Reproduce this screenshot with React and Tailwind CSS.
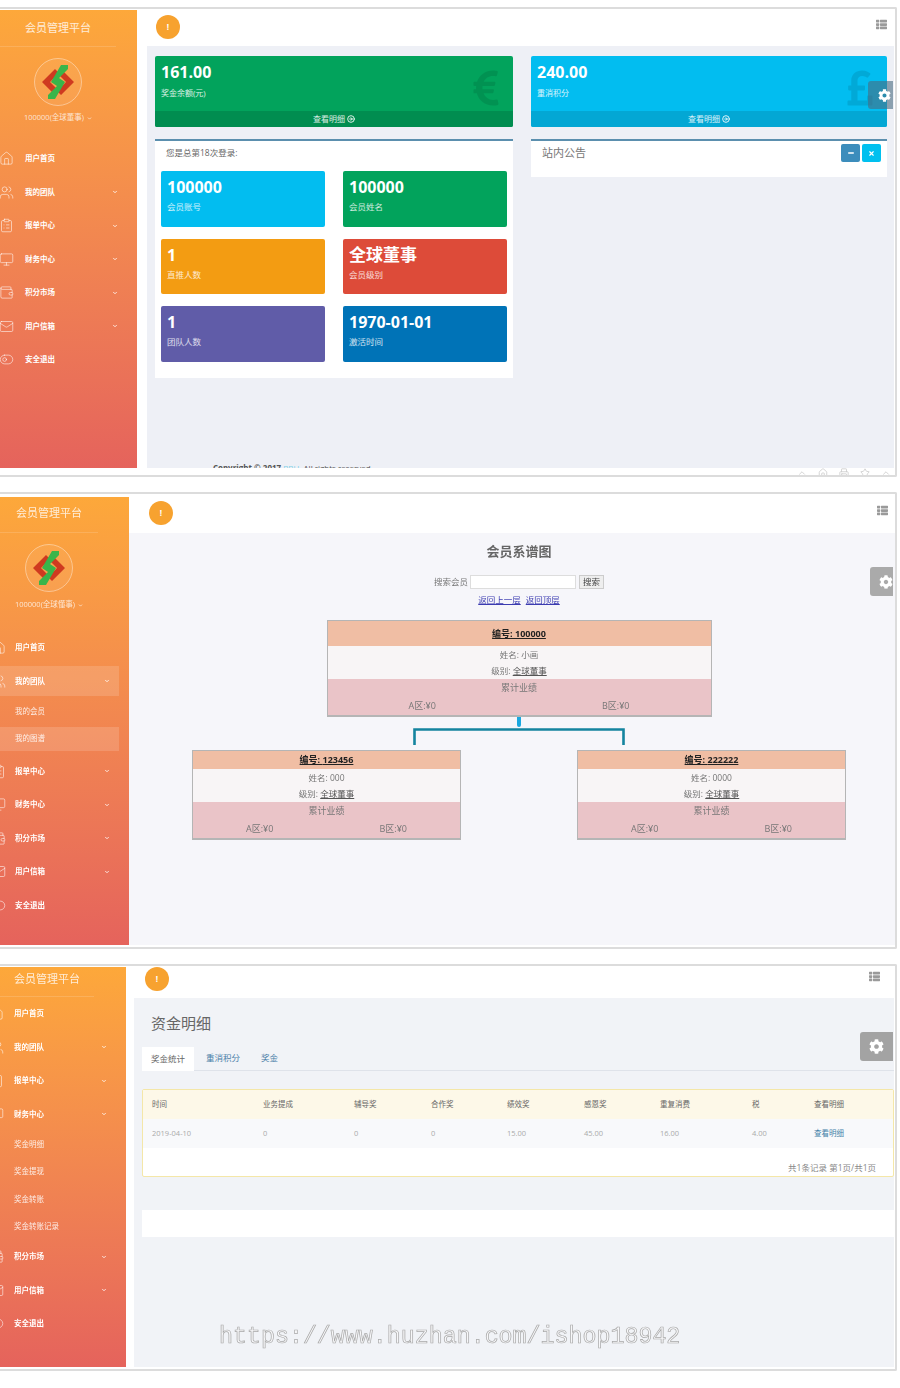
import React from "react";
import { Home, Users, ClipboardList, Monitor, Wallet, Mail, ToggleLeft, ChevronDown, ChevronUp, Minus, X, CircleArrowRight, Printer, Star } from "lucide-react";
import { FaCog, FaThList, FaEuroSign, FaPoundSign } from "react-icons/fa";

const FONT = "[font-family:'Open_Sans','Noto_Sans_CJK_SC',sans-serif]";

function Logo() {
  return (
    <svg viewBox="0 0 48 48" className="w-[48px] h-[48px] shrink-0">
      <circle cx="24" cy="24" r="23.5" fill="#ffffff" fillOpacity="0.06" stroke="#ffffff" strokeOpacity="0.4" />
      <path d="M21 11 L8 24 L20 36 L24 32 L16 24 L25 15 Z" fill="#cf3a20" />
      <path d="M27 37 L40 24 L28 12 L24 16 L32 24 L23 33 Z" fill="#cf3a20" />
      <path d="M27 7 L34 7 L34 11 L25 20 L31 24 L21 41 L14 41 L14 37 L23 28 L17 24 Z" fill="#39b54a" />
    </svg>
  );
}

const ICONS = { home: Home, users: Users, clip: ClipboardList, mon: Monitor, wallet: Wallet, mail: Mail, toggle: ToggleLeft };

function MenuItem({ icon, label, caret, active, s }) {
  const Icon = ICONS[icon];
  return (
    <div className={`flex items-center h-[33.5px] ${s.row}`}>
      <div className={`flex items-center h-[30px] w-full ${active ? "bg-white/15" : ""}`}>
        <div className={`shrink-0 ${s.iconBox}`}>
          <Icon size={15} strokeWidth={1.1} className={`text-white/80 ${s.icon}`} />
        </div>
        <span className="flex-1 text-[7.5px] font-bold text-white">{label}</span>
        {caret && <ChevronDown size={6} strokeWidth={4} className={`text-white/80 ${s.caret}`} />}
      </div>
    </div>
  );
}

function SubItem({ label, active, s }) {
  return (
    <div className={`flex items-center h-[27.3px] ${s.row}`}>
      <div className={`flex items-center h-[24px] w-full ${active ? "bg-white/15" : ""}`}>
        <span className={`text-[7.5px] text-white/85 ${s.subText}`}>{label}</span>
      </div>
    </div>
  );
}

function Brand({ title, s }) {
  return <div className={`border-b border-white/15 flex items-center justify-center text-[11px] text-white/80 ${s.brand}`}>{title}</div>;
}

function UserBlock({ name, s }) {
  return (
    <div className={`flex flex-col items-center ${s.inner}`}>
      <div className="mt-[11px]"><Logo /></div>
      <div className={`flex items-center gap-[3px] h-[12px] text-[7.5px] text-white/75 ${s.userMt}`}>
        {name}
        <ChevronDown size={5} strokeWidth={4} />
      </div>
    </div>
  );
}

const BASE_MENU = [
  ["home", "用户首页", false],
  ["users", "我的团队", true],
  ["clip", "报单中心", true],
  ["mon", "财务中心", true],
  ["wallet", "积分市场", true],
  ["mail", "用户信箱", true],
  ["toggle", "安全退出", false],
];

const S1 = {
  side: "w-[137px]",
  inner: "w-[116px]",
  brand: "h-[37px] w-[116px]",
  userMt: "mt-[6px]",
  menuMt: "mt-[18px]",
  row: "w-[124px]",
  iconBox: "w-[25px]",
  icon: "-ml-[1px]",
  caret: "mr-[6px]",
  subText: "ml-[25px]",
};
const S2 = {
  side: "w-[129px]",
  inner: "w-[98px]",
  brand: "h-[36px] w-[98px] pb-[2px]",
  userMt: "mt-[7px]",
  menuMt: "mt-[20px]",
  row: "w-[119px]",
  iconBox: "w-[15px]",
  icon: "-ml-[9px]",
  caret: "mr-[9px]",
  subText: "ml-[15px]",
};
const S3 = {
  side: "w-[126px]",
  inner: "w-[94px]",
  brand: "h-[30px] w-[94px] pb-[4px]",
  userMt: "",
  menuMt: "",
  row: "w-[116px]",
  iconBox: "w-[14px]",
  icon: "-ml-[11px]",
  caret: "mr-[9px]",
  subText: "ml-[14px]",
};

function Sidebar({ s, children }) {
  return (
    <aside className={`shrink-0 h-full bg-gradient-to-b from-[#fda83a] to-[#e5635c] overflow-hidden ${s.side}`}>{children}</aside>
  );
}

function TopBar({ h, circle, list }) {
  return (
    <div className={`flex items-start justify-between bg-white shrink-0 ${h}`}>
      <div className={`w-[24px] h-[24px] rounded-full bg-[#f7a22f] flex items-center justify-center text-white text-[8px] font-bold ${circle}`}>!</div>
      <FaThList size={11} className={`text-[#9a9a9a] ${list}`} />
    </div>
  );
}

function StatCard({ value, label, bg, foot, Icon }) {
  return (
    <div className={`h-[71px] rounded-[2px] flex flex-col overflow-hidden relative ${bg}`}>
      <div className="flex-1 pl-[6px] pt-[6px] text-white">
        <div className="text-[16px] font-bold leading-[20px]">{value}</div>
        <div className="text-[8px] mt-[5px] leading-[12px] text-white/85">{label}</div>
      </div>
      <Icon size={40} className="absolute right-[7px] top-[12px] text-black/10" />
      <div className={`h-[16px] flex items-center justify-center gap-[2px] text-[8px] text-white/85 ${foot}`}>
        查看明细 <CircleArrowRight size={8} strokeWidth={3} />
      </div>
    </div>
  );
}

function Tile({ value, label, bg, big }) {
  return (
    <div className={`h-[55.5px] rounded-[2px] pl-[6px] pt-[5px] text-white ${bg}`}>
      <div className={`${big ? "text-[17px]" : "text-[16px]"} font-bold leading-[22px]`}>{value}</div>
      <div className="text-[8.5px] mt-[3px] leading-[12px] text-white/80">{label}</div>
    </div>
  );
}

function GearTab({ cls, size }) {
  return (
    <div className={`absolute right-[2px] flex items-center rounded-l-[3px] overflow-hidden ${cls}`}>
      <FaCog size={size} className="text-white shrink-0" />
    </div>
  );
}

function Screen1() {
  return (
    <section className="relative mt-[7px] border-t-2 border-b-2 border-r-2 border-[#dcdcdc] pt-[1px] rounded-r-[2px]">
      <div className="flex h-[458px]">
        <Sidebar s={S1}>
          <Brand title="会员管理平台" s={S1} />
          <UserBlock name="100000(全球董事)" s={S1} />
          <div className={S1.menuMt}>
            {BASE_MENU.map(([i, l, c]) => <MenuItem key={l} icon={i} label={l} caret={c} s={S1} />)}
          </div>
        </Sidebar>
        <div className="flex-1 flex flex-col min-w-0 bg-white">
          <TopBar h="h-[36px]" circle="ml-[19px] mt-[5px]" list="mt-[9px] mr-[8px]" />
          <div className="flex-1 ml-[10px] mr-[1px] bg-[#eef0f6] pl-[8px] pt-[10px] flex flex-col overflow-hidden">
            <div className="grid grid-cols-[358px_356px] gap-x-[18px] gap-y-[12px] items-start">
              <StatCard value="161.00" label="奖金余额(元)" bg="bg-[#02a35c]" foot="bg-[#018d50]" Icon={FaEuroSign} />
              <StatCard value="240.00" label="重消积分" bg="bg-[#02bdf0]" foot="bg-[#03a7d4]" Icon={FaPoundSign} />
              <div className="h-[239px] bg-white border-t-2 border-[#5b8fae] px-[6px]">
                <div className="h-[24px] flex items-center text-[8.5px] text-[#666] pl-[5px]">您是总第18次登录:</div>
                <div className="grid grid-cols-[164px_164px] gap-x-[18px] gap-y-[12px] mt-[6px]">
                  <Tile value="100000" label="会员账号" bg="bg-[#02bdf0]" />
                  <Tile value="100000" label="会员姓名" bg="bg-[#02a35c]" />
                  <Tile value="1" label="直推人数" bg="bg-[#f39c12]" />
                  <Tile value="全球董事" label="会员级别" bg="bg-[#dd4b39]" big />
                  <Tile value="1" label="团队人数" bg="bg-[#605ca8]" />
                  <Tile value="1970-01-01" label="激活时间" bg="bg-[#0073b7]" />
                </div>
              </div>
              <div className="h-[38px] bg-white border-t-2 border-[#5b8fae] flex items-start justify-between pl-[11px] pr-[6px]">
                <span className="text-[11px] text-[#777] mt-[4px]">站内公告</span>
                <div className="flex gap-[2px] mt-[3px]">
                  <div className="w-[19px] h-[18px] rounded-[2px] bg-[#3c8dbc] flex items-center justify-center"><Minus size={8} strokeWidth={4} className="text-white" /></div>
                  <div className="w-[19px] h-[18px] rounded-[2px] bg-[#00c0ef] flex items-center justify-center"><X size={7} strokeWidth={4} className="text-white" /></div>
                </div>
              </div>
            </div>
            <div className="mt-auto ml-[58px] h-[5px] overflow-hidden text-[8px] leading-[10px] text-[#555]">
              <b>Copyright © 2017</b> <span className="text-[#7fd0e8]">BBU.</span> All rights reserved
            </div>
          </div>
        </div>
      </div>
      <div className="h-[7px] overflow-hidden flex justify-end items-start gap-[11px] pr-[4px] text-[#cccccc]">
        <ChevronUp size={10} strokeWidth={2} />
        <Home size={10} strokeWidth={2} />
        <Printer size={10} strokeWidth={2} />
        <Star size={10} strokeWidth={2} />
        <ChevronUp size={10} strokeWidth={2} />
      </div>
      <GearTab cls="top-[72px] w-[25px] h-[28px] bg-[#4a6a80]/60 justify-end pr-[2px]" size={13} />
    </section>
  );
}

function TreeNode({ id, name, big }) {
  return (
    <div className={`${big ? "w-[385px]" : "w-[269px]"} border border-[#b5b5b5] border-b-2 text-center`}>
      <div className={`bg-[#f0bea4] flex items-center justify-center text-[9px] font-bold text-[#222] underline ${big ? "h-[25px]" : "h-[18px]"}`}>编号: {id}</div>
      <div className="bg-[#f8f5f6] h-[33px] text-[8.5px] text-[#777] flex flex-col justify-center leading-[16px]">
        <div>姓名: {name}</div>
        <div>级别: <span className="text-[#555] underline">全球董事</span></div>
      </div>
      <div className="bg-[#eac4c8] text-[9px] text-[#777] h-[36px]">
        <div className="h-[18px] flex items-center justify-center">累计业绩</div>
        <div className={`h-[18px] flex items-center justify-between ${big ? "px-[81px]" : "px-[53px]"}`}>
          <span>A区:¥0</span><span>B区:¥0</span>
        </div>
      </div>
    </div>
  );
}

function Screen2() {
  return (
    <section className="relative mt-[15px] border-t-2 border-b-2 border-r-2 border-[#dcdcdc] pt-[3px] pb-[2px] rounded-r-[2px]">
      <div className="flex h-[448px]">
        <Sidebar s={S2}>
          <Brand title="会员管理平台" s={S2} />
          <UserBlock name="100000(全球懂事)" s={S2} />
          <div className={S2.menuMt}>
            <MenuItem icon="home" label="用户首页" s={S2} />
            <MenuItem icon="users" label="我的团队" caret active s={S2} />
            <SubItem label="我的会员" s={S2} />
            <SubItem label="我的图谱" active s={S2} />
            <div className="h-[2px]" />
            {BASE_MENU.slice(2).map(([i, l, c]) => <MenuItem key={l} icon={i} label={l} caret={c} s={S2} />)}
          </div>
        </Sidebar>
        <div className="flex-1 flex flex-col min-w-0 bg-[#f6f6fa]">
          <TopBar h="h-[36px]" circle="ml-[20px] mt-[4px]" list="mt-[8px] mr-[7px]" />
          <div className="flex-1 pl-[16px] pr-[2px] flex flex-col items-center">
            <div className="mt-[10px] h-[18px] flex items-center text-[13px] font-bold text-[#666]">会员系谱图</div>
            <div className="mt-[14px] flex items-center gap-[2px] text-[8.5px] text-[#777]">
              <span>搜索会员</span>
              <div className="w-[106px] h-[14px] bg-white border border-[#ddd]" />
              <div className="w-[25px] h-[14px] ml-[1px] bg-[#eee] border border-[#ccc] flex items-center justify-center text-[#444]">搜索</div>
            </div>
            <div className="mt-[5px] flex gap-[5px] text-[8.5px] text-[#3b3bb0] underline leading-[11px]">
              <span>返回上一层</span><span>返回顶层</span>
            </div>
            <div className="mt-[15px]"><TreeNode id="100000" name="小画" big /></div>
            <svg viewBox="0 0 212 33" className="w-[212px] h-[33px] shrink-0">
              <path d="M106 0 V8" stroke="#1aa8e0" strokeWidth="4" strokeLinecap="round" fill="none" />
              <path d="M1.5 28 V12.5 H210.5 V28" stroke="#14849f" strokeWidth="2.6" fill="none" />
            </svg>
            <div className="flex gap-[116px]">
              <TreeNode id="123456" name="000" />
              <TreeNode id="222222" name="0000" />
            </div>
          </div>
        </div>
      </div>
      <GearTab cls="top-[73px] w-[23px] h-[29px] bg-[#aaaaaa] justify-end" size={14} />
    </section>
  );
}

const COLS = ["时间", "业务提成", "辅导奖", "合作奖", "绩效奖", "感恩奖", "重复消费", "税", "查看明细"];
const ROW = ["2019-04-10", "0", "0", "0", "15.00", "45.00", "16.00", "4.00", "查看明细"];
const GRID = "grid grid-cols-[111px_91px_77px_76px_77px_76px_92px_62px_1fr] pl-[9px] items-center h-[29px]";

function Screen3() {
  return (
    <section className="relative mt-[15px] border-t-2 border-b-2 border-r-2 border-[#dcdcdc] pt-[1px] pb-[2px] rounded-r-[2px]">
      <div className="flex h-[400px]">
        <Sidebar s={S3}>
          <Brand title="会员管理平台" s={S3} />
          <MenuItem icon="home" label="用户首页" s={S3} />
          <MenuItem icon="users" label="我的团队" caret s={S3} />
          <MenuItem icon="clip" label="报单中心" caret s={S3} />
          <MenuItem icon="mon" label="财务中心" caret s={S3} />
          <SubItem label="奖金明细" s={S3} />
          <SubItem label="奖金提现" s={S3} />
          <SubItem label="奖金转账" s={S3} />
          <SubItem label="奖金转账记录" s={S3} />
          {BASE_MENU.slice(4).map(([i, l, c]) => <MenuItem key={l} icon={i} label={l} caret={c} s={S3} />)}
        </Sidebar>
        <div className="flex-1 flex flex-col min-w-0 bg-white">
          <TopBar h="h-[31px]" circle="ml-[19px]" list="mt-[4px] mr-[15px]" />
          <div className="flex-1 ml-[8px] mr-[1px] bg-[#f1f3f7] pl-[8px] flex flex-col">
            <div className="mt-[15px] ml-[9px] h-[20px] flex items-center text-[15px] text-[#666]">资金明细</div>
            <div className="mt-[14px] flex h-[24px] border-b border-[#dfe3ea] text-[8.5px] text-[#4a7ea8]">
              <div className="w-[52px] h-[24px] bg-white flex items-center justify-center text-[#666]">奖金统计</div>
              <div className="ml-[12px] flex items-center">重消积分</div>
              <div className="ml-[21px] flex items-center">奖金</div>
            </div>
            <div className="mt-[18px] h-[88px] border border-[#f4e7a8] bg-white rounded-[2px] text-[7.5px] text-[#888]">
              <div className={`${GRID} bg-[#fdf8e8] text-[#666]`}>
                {COLS.map((c) => <div key={c}>{c}</div>)}
              </div>
              <div className={`${GRID} bg-[#f8f9fb] text-[#aaa]`}>
                {ROW.map((c, i) => <div key={i} className={i === 8 ? "text-[#3f7fa8]" : ""}>{c}</div>)}
              </div>
              <div className="h-[27px] flex items-end justify-end pr-[17px] text-[8.5px] text-[#888]">共1条记录 第1页/共1页</div>
            </div>
            <div className="mt-[33px] h-[27px] bg-white" />
          </div>
        </div>
      </div>
      <GearTab cls="top-[66px] w-[33px] h-[29px] bg-[#a3a3a3] justify-center" size={15} />
    </section>
  );
}

export default function App() {
  return (
    <div className={`relative w-[900px] h-[1388px] overflow-hidden bg-white ${FONT}`}>
      <div className="blur-[0.5px] h-full w-[897px] overflow-hidden">
        <div className="h-[7px] -mb-[7px]" />
        <Screen1 />
        <Screen2 />
        <Screen3 />
      </div>
      <div className="absolute left-[219px] top-[1324px] text-[23.3px] leading-[26px] text-[#f7f7f9] [-webkit-text-stroke:0.7px_#a8a8a8] [font-family:'Liberation_Mono',monospace] whitespace-nowrap">
        https://www.huzhan.com/ishop18942
      </div>
    </div>
  );
}
